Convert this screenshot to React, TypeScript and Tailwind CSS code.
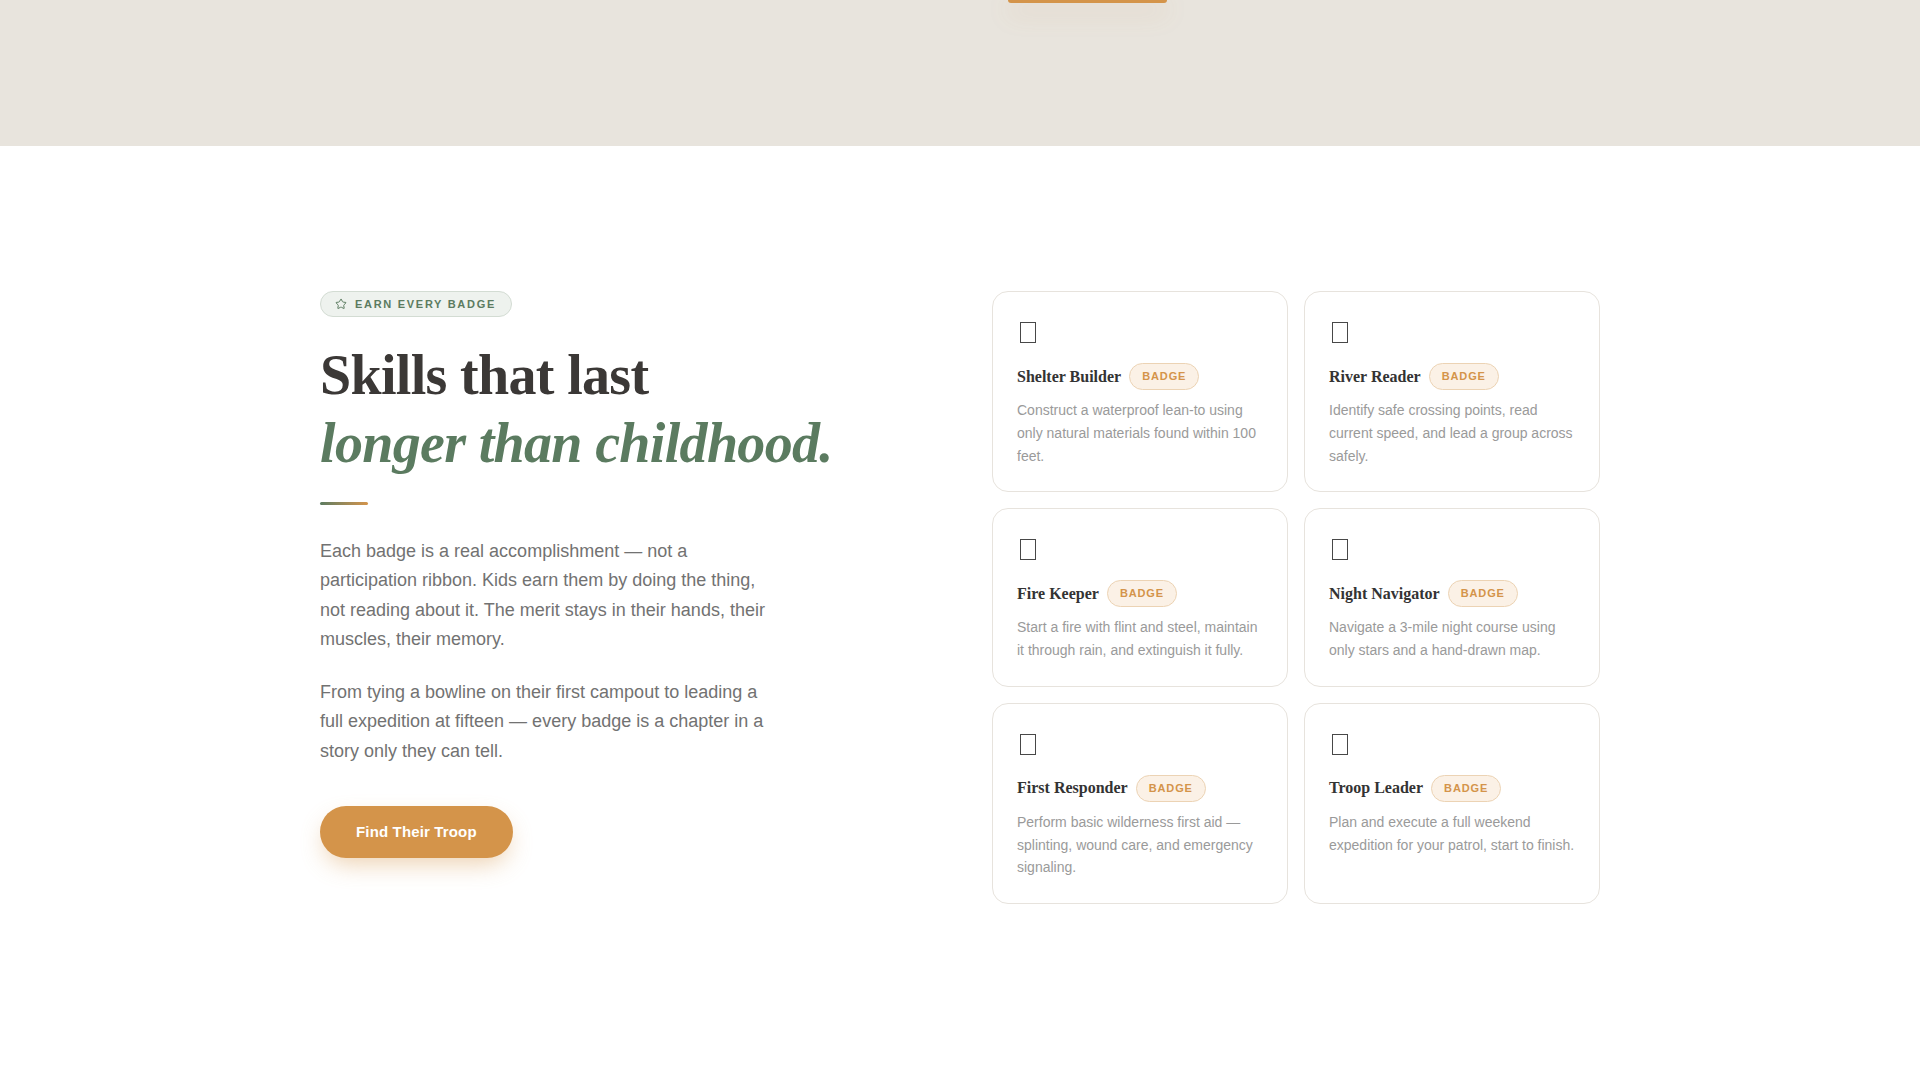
import { Star } from "lucide-react";

type Skill = { title: string; desc: string };

const skills: Skill[] = [
  { title: "Shelter Builder", desc: "Construct a waterproof lean-to using only natural materials found within 100 feet." },
  { title: "River Reader", desc: "Identify safe crossing points, read current speed, and lead a group across safely." },
  { title: "Fire Keeper", desc: "Start a fire with flint and steel, maintain it through rain, and extinguish it fully." },
  { title: "Night Navigator", desc: "Navigate a 3-mile night course using only stars and a hand-drawn map." },
  { title: "First Responder", desc: "Perform basic wilderness first aid — splinting, wound care, and emergency signaling." },
  { title: "Troop Leader", desc: "Plan and execute a full weekend expedition for your patrol, start to finish." },
];

function SkillCard({ title, desc }: Skill) {
  return (
    <div className="rounded-2xl border border-[#e7e3dd] bg-white p-6">
      {/* the emoji glyph renders as a missing-glyph box */}
      <div className="ml-[3px] mt-[6px] h-[21px] w-[16px] border-[1.5px] border-[#484848]" />
      <div className="mt-[20px] flex items-center gap-2">
        <h3 className="font-['Liberation_Serif',serif] text-[16px] font-bold leading-6 text-[#333]">{title}</h3>
        <span className="rounded-full border border-[#ecd3b4] bg-[#fbf1e6] px-3 py-[4px] text-[11px] font-bold leading-[17px] tracking-[0.08em] text-[#d4944a]">
          BADGE
        </span>
      </div>
      <p className="mt-[9px] text-[14px] leading-[1.625] text-[#9a9a9a]">{desc}</p>
    </div>
  );
}

export default function App() {
  return (
    <div className="min-h-screen bg-white font-['Liberation_Sans',Arial,sans-serif]">
      <div className="h-[146px] bg-[#e8e4dd]">
        <div className="mx-auto w-[1280px]">
          <div className="ml-[688px] h-[3px] w-[159px] rounded-b-full bg-[#d4944a] shadow-[0_8px_24px_rgba(212,148,74,0.4)]" />
        </div>
      </div>

      <section className="mx-auto grid w-[1280px] grid-cols-2 items-start gap-16 pb-36 pt-[145px]">
        <div>
          <div className="mb-6">
            <span className="inline-flex h-[26px] items-center gap-2 rounded-full border border-[#d3dcd3] bg-[#eef2ee] pl-[14px] pr-[15px] text-[11px] font-bold uppercase tracking-[0.155em] text-[#5b7b60]">
              <Star size={12} strokeWidth={2} />
              Earn every badge
            </span>
          </div>
          <h2 className="font-['Liberation_Serif',serif] text-[56px] font-bold leading-[68px] tracking-[-0.012em] text-[#3b3836]">
            Skills that last
            <br />
            <em className="text-[#5b7b60]">longer than childhood.</em>
          </h2>
          <div className="mt-[25px] h-[3px] w-12 rounded-full bg-linear-to-r from-[#5b7b60] to-[#d4944a]" />
          <p className="mt-8 max-w-[448px] text-[18px] leading-[1.625] text-[#727272]">
            Each badge is a real accomplishment — not a participation ribbon. Kids earn them by doing the thing, not
            reading about it. The merit stays in their hands, their muscles, their memory.
          </p>
          <p className="mt-6 max-w-[448px] text-[18px] leading-[1.625] text-[#727272]">
            From tying a bowline on their first campout to leading a full expedition at fifteen — every badge is a
            chapter in a story only they can tell.
          </p>
          <button className="mt-10 inline-flex rounded-full bg-[#d4944a] px-9 py-4 text-[15px] font-bold leading-5 tracking-[0.01em] text-white shadow-[0_10px_25px_-5px_rgba(212,148,74,0.45)]">
            Find Their Troop
          </button>
        </div>

        <div className="grid grid-cols-2 gap-4">
          {skills.map((s) => (
            <SkillCard key={s.title} {...s} />
          ))}
        </div>
      </section>
    </div>
  );
}
